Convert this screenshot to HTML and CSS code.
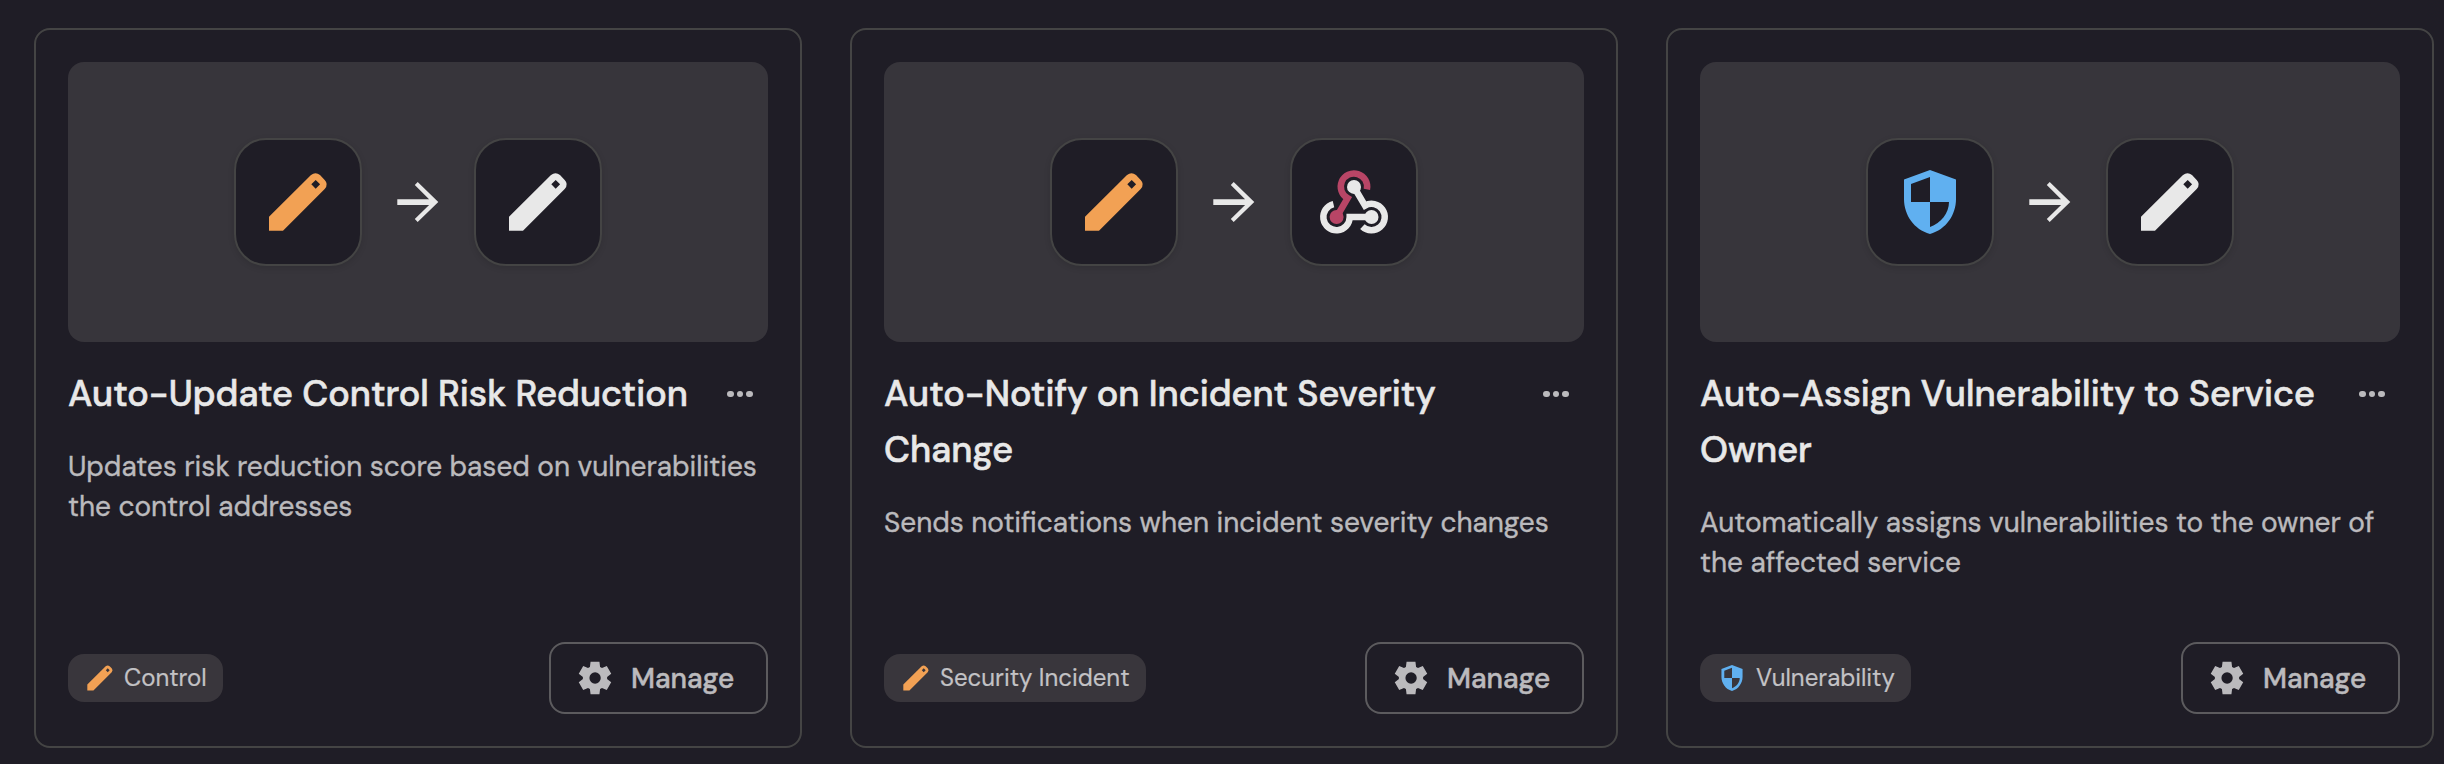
FILE: index.html
```
<!DOCTYPE html>
<html lang="en">
<head>
<meta charset="utf-8">
<title>Automations</title>
<link rel="stylesheet" href="styles.css">
</head>
<body>
<svg class="sprite" aria-hidden="true">
  <symbol id="pencil" viewBox="0 0 64 64">
    <path fill-rule="evenodd" d="M3 60.700V46.700L45 5.100Q49.500 1.200 54 5.100L58.700 9.900Q62.800 14.300 58.700 18.900L17 60.700ZM49.700 9.900L45.300 14.300L49.700 18.700L54.100 14.300Z"/>
  </symbol>
  <symbol id="arrow" viewBox="0 0 64 64">
    <path d="M11.300 29.200H43.100L28.800 14.900L31.700 12L52.300 32L31.700 52L28.800 49.100L43.100 34.900H11.300Z"/>
  </symbol>
  <symbol id="shield" viewBox="0 0 64 64">
    <path fill-rule="evenodd" d="M32 0L58 9.600V29C58 45 48 59.500 32 64C16 59.500 6 45 6 29V9.600ZM32 7L13 14V32H32ZM32 32V57C43 53 51 43 51 32Z"/>
  </symbol>
  <symbol id="gear" viewBox="-15 -975 990 990">
    <path d="m370-80-16-128q-13-5-24.500-12T307-235l-119 50L78-375l103-78q-1-7-1-13.500v-27q0-6.500 1-13.500L78-585l110-190 119 50q11-8 23-15t24-12l16-128h220l16 128q13 5 24.500 12t22.500 15l119-50 110 190-103 78q1 7 1 13.500v27q0 6.500-2 13.500l103 78-110 190-118-50q-11 8-23 15t-24 12L590-80H370Zm112-260q58 0 99-41t41-99q0-58-41-99t-99-41q-59 0-99.500 41T342-480q0 58 40.500 99t99.500 41Z"/>
  </symbol>
</svg>

<main class="cards">
  <article class="card">
    <div class="flow">
      <div class="tile orange"><svg><use href="#pencil"/></svg></div>
      <svg class="arrow"><use href="#arrow"/></svg>
      <div class="tile"><svg><use href="#pencil"/></svg></div>
    </div>
    <header class="head">
      <h2 class="title">Auto-Update Control Risk Reduction</h2>
      <button class="more" aria-label="More"><i></i><i></i><i></i></button>
    </header>
    <p class="desc">Updates risk reduction score based on vulnerabilities<br>the control addresses</p>
    <footer class="foot">
      <span class="chip chip-control"><svg class="orange"><use href="#pencil"/></svg><span class="label">Control</span></span>
      <button class="manage"><svg><use href="#gear"/></svg>Manage</button>
    </footer>
  </article>

  <article class="card">
    <div class="flow">
      <div class="tile orange"><svg><use href="#pencil"/></svg></div>
      <svg class="arrow"><use href="#arrow"/></svg>
      <div class="tile">
        <svg class="hook" viewBox="0 0 84 80">
          <g fill="none" stroke-width="6.500">
            <path class="rose-line" d="M54.900 27.300A13.200 13.200 0 1 0 35.600 36.200L24.600 55"/>
            <path class="white-line" d="M42 25L53 43.600A13.200 13.200 0 1 1 50.400 64.600"/>
            <path class="white-line" d="M21.500 42.200A13.200 13.200 0 1 0 37.700 55H59.500"/>
          </g>
          <circle class="rose" cx="24.600" cy="55" r="7"/>
          <circle cx="42" cy="24.900" r="7"/>
          <circle cx="59.500" cy="55" r="7"/>
        </svg>
      </div>
    </div>
    <header class="head">
      <h2 class="title">Auto-Notify on Incident Severity<br>Change</h2>
      <button class="more" aria-label="More"><i></i><i></i><i></i></button>
    </header>
    <p class="desc">Sends notifications when incident severity changes</p>
    <footer class="foot">
      <span class="chip chip-incident"><svg class="orange"><use href="#pencil"/></svg><span class="label">Security Incident</span></span>
      <button class="manage"><svg><use href="#gear"/></svg>Manage</button>
    </footer>
  </article>

  <article class="card">
    <div class="flow">
      <div class="tile blue"><svg><use href="#shield"/></svg></div>
      <svg class="arrow"><use href="#arrow"/></svg>
      <div class="tile"><svg><use href="#pencil"/></svg></div>
    </div>
    <header class="head">
      <h2 class="title">Auto-Assign Vulnerability to Service<br>Owner</h2>
      <button class="more" aria-label="More"><i></i><i></i><i></i></button>
    </header>
    <p class="desc">Automatically assigns vulnerabilities to the owner of<br>the affected service</p>
    <footer class="foot">
      <span class="chip chip-vuln"><svg class="blue"><use href="#shield"/></svg><span class="label">Vulnerability</span></span>
      <button class="manage"><svg><use href="#gear"/></svg>Manage</button>
    </footer>
  </article>
</main>
</body>
</html>
```
FILE: styles.css
```
* { box-sizing: border-box; }
body {
  margin: 0;
  height: 764px;
  overflow: hidden;
  background: #1f1d26;
  color: #e8e8e8;
  font-family: "DM Sans", Inter, "Liberation Sans", sans-serif;
  -webkit-text-stroke: 0.4px currentColor;
}
.sprite { display: none; }
svg { fill: currentColor; flex: none; }
.cards {
  display: grid;
  grid-template-columns: repeat(3, 768px);
  gap: 48px;
  padding: 28px 0 0 34px;
}
.card {
  display: flex;
  flex-direction: column;
  height: 720px;
  padding: 32px;
  border: 2px solid #444444;
  border-radius: 16px;
}
.flow {
  display: flex;
  align-items: center;
  justify-content: center;
  gap: 24px;
  height: 280px;
  flex: none;
  border-radius: 16px;
  background: #37353b;
}
.tile {
  display: flex;
  align-items: center;
  justify-content: center;
  width: 128px;
  height: 128px;
  border: 2px solid #444444;
  border-radius: 32px;
  background: #1f1d26;
  box-shadow: 0 2px 6px rgba(0, 0, 0, .12);
}
.tile svg, .arrow { width: 64px; height: 64px; }
.tile .hook { width: 84px; height: 80px; }
.orange { color: #f2a154; }
.blue { color: #60b0f0; }
.rose { fill: #b84566; }
.rose-line { stroke: #b84566; }
.white-line { stroke: #e8e8e8; }
.head {
  display: flex;
  justify-content: space-between;
  align-items: flex-start;
  margin-top: 24px;
}
.title {
  margin: 0;
  font-size: 36px;
  font-weight: 500;
  line-height: 56px;
  white-space: nowrap;
  -webkit-text-stroke-width: 0.6px;
}
.more {
  display: flex;
  align-items: center;
  justify-content: center;
  gap: 3px;
  width: 56px;
  height: 56px;
  padding: 0;
  border: 0;
  background: none;
}
.more i { width: 6.600px; height: 6.600px; border-radius: 50%; background: #bbbabd; }
.desc {
  margin: 25px 0 0;
  color: #bbbabd;
  -webkit-text-stroke-color: #bbbabd;
  font-size: 28px;
  line-height: 40px;
  white-space: nowrap;
}
.foot {
  display: flex;
  align-items: center;
  justify-content: space-between;
  margin-top: auto;
}
.chip {
  display: flex;
  align-items: center;
  gap: 10px;
  height: 48px;
  padding-left: 18px;
  border-radius: 16px;
  background: #39363c;
  color: #c3c2c5;
  font-size: 24px;
  white-space: nowrap;
  -webkit-text-stroke: 0.2px #c3c2c5;
}
.label { padding-bottom: 2px; }
.chip svg { width: 28px; height: 28px; }
.chip .blue { height: 26px; }
.chip svg, .manage svg { stroke: none; }
.chip-control { width: 155px; }
.chip-incident { width: 262px; }
.chip-vuln { width: 211px; }
.manage {
  display: flex;
  align-items: center;
  gap: 16px;
  width: 219px;
  height: 72px;
  padding: 0 0 0 24px;
  border: 2px solid #5c5b5e;
  border-radius: 16px;
  background: none;
  color: #bbbabd;
  font: inherit;
  font-size: 28px;
  font-weight: 500;
  -webkit-text-stroke: 0.5px #bbbabd;
}
.manage svg { width: 40px; height: 40px; }
```
